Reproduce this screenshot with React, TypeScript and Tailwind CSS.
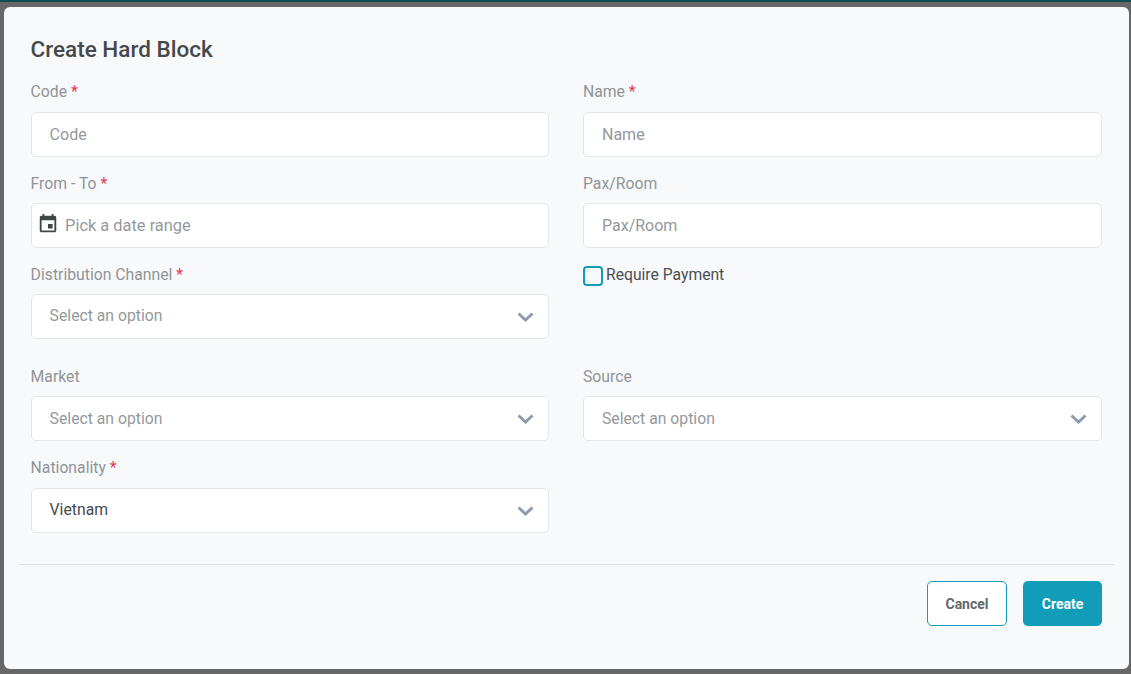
function Label({ text, required }: { text: string; required?: boolean }) {
  return (
    <label className="block h-[24px] pt-[2px] text-[15.75px] leading-[24px] text-[#909497]">
      {text}
      {required ? <span className="text-[#e5384f]"> *</span> : null}
    </label>
  );
}

function Chevron() {
  return (
    <svg width="17" height="10" viewBox="0 0 17 10" fill="none" stroke="#8f9bab" strokeWidth="3">
      <path d="M1.5 1.5 8.5 8 15.5 1.5" />
    </svg>
  );
}

function TextField({ label, required, wide }: { label: string; required?: boolean; wide?: boolean }) {
  return (
    <div>
      <Label text={label} required={required} />
      <div
        className={`${wide ? "mt-[10px]" : "mt-[9px]"} flex h-[45px] items-center rounded-[5px] border border-[#e4e6ea] bg-white pl-[18px] text-[16px] text-[#94989b]`}
      >
        {label}
      </div>
    </div>
  );
}

function SelectField({
  label,
  value,
  required,
  wide,
  lift,
}: {
  label: string;
  value?: string;
  required?: boolean;
  wide?: boolean;
  lift?: boolean;
}) {
  return (
    <div>
      <Label text={label} required={required} />
      <div
        className={`${wide ? "mt-[10px]" : "mt-[9px]"} flex h-[45px] items-center justify-between rounded-[5px] border border-[#e4e6ea] bg-white pl-[18px] pr-[14px] text-[15.75px]`}
      >
        <span className={`${lift ? "mt-[-2px]" : ""} ${value ? "text-[#454a4d]" : "text-[#94989b]"}`}>
          {value ?? "Select an option"}
        </span>
        <Chevron />
      </div>
    </div>
  );
}

export default function App() {
  return (
    <div
      className="flex h-[674px] w-[1131px] flex-col overflow-hidden bg-[#666766]"
      style={{ fontFamily: "Roboto, sans-serif" }}
    >
      <div className="h-[2px] bg-[#0f4a55]" />
      <div className="ml-[4px] mt-[5px] flex h-[662px] w-[1125px] flex-col rounded-[6px] bg-[#f8f9fb] pl-[26.6px] pr-[27px] pt-[27px]">
        <h1 className="h-[30px] text-[22.5px] font-medium leading-[30px] text-[#45494c]">Create Hard Block</h1>
        <div className="mt-[14px] grid grid-cols-[518.4px_519px] gap-x-[34px] gap-y-[13px]">
          <TextField label="Code" required wide />
          <TextField label="Name" required wide />
          <div>
            <Label text="From - To" required />
            <div className="mt-[9px] flex h-[45px] items-center rounded-[5px] border border-[#e4e6ea] bg-white pl-[5px] text-[16.4px] text-[#94989b]">
              <svg width="22" height="22" viewBox="0 0 24 24" fill="#3f4447" className="mr-[6.5px] mt-[-3px]">
                <path d="M17 12h-5v5h5v-5zM16 1v2H8V1H6v2H5c-1.11 0-1.99.9-1.99 2L3 19c0 1.1.89 2 2 2h14c1.1 0 2-.9 2-2V5c0-1.1-.9-2-2-2h-1V1h-2zm3 18H5V8h14v11z" />
              </svg>
              <span className="mt-[1px]">Pick a date range</span>
            </div>
          </div>
          <TextField label="Pax/Room" />
          <SelectField label="Distribution Channel" required lift />
          <div className="flex items-start">
            <span className="mt-[5px] h-[20px] w-[20px] rounded-[4px] border-2 border-[#119cb9]" />
            <span className="ml-[3px] pt-[2px] text-[15.7px] leading-[24px] text-[#4a4f52]">Require Payment</span>
          </div>
          <div className="mt-[11px]">
            <SelectField label="Market" />
          </div>
          <div className="mt-[11px]">
            <SelectField label="Source" />
          </div>
          <SelectField label="Nationality" value="Vietnam" required wide lift />
        </div>
        <div className="ml-[-11.6px] mr-[-12px] mt-[31px] h-px bg-[#dfe2e6]" />
        <div className="mt-[16px] flex justify-end gap-[16px]">
          <button className="h-[45px] w-[80px] rounded-[5px] border border-[#119cb9] bg-white pt-[1px] text-[14px] font-bold text-[#63686b]">
            Cancel
          </button>
          <button className="h-[45px] w-[79px] rounded-[5px] bg-[#119cb9] pt-[1px] text-[14px] font-bold text-white">
            Create
          </button>
        </div>
      </div>
    </div>
  );
}
